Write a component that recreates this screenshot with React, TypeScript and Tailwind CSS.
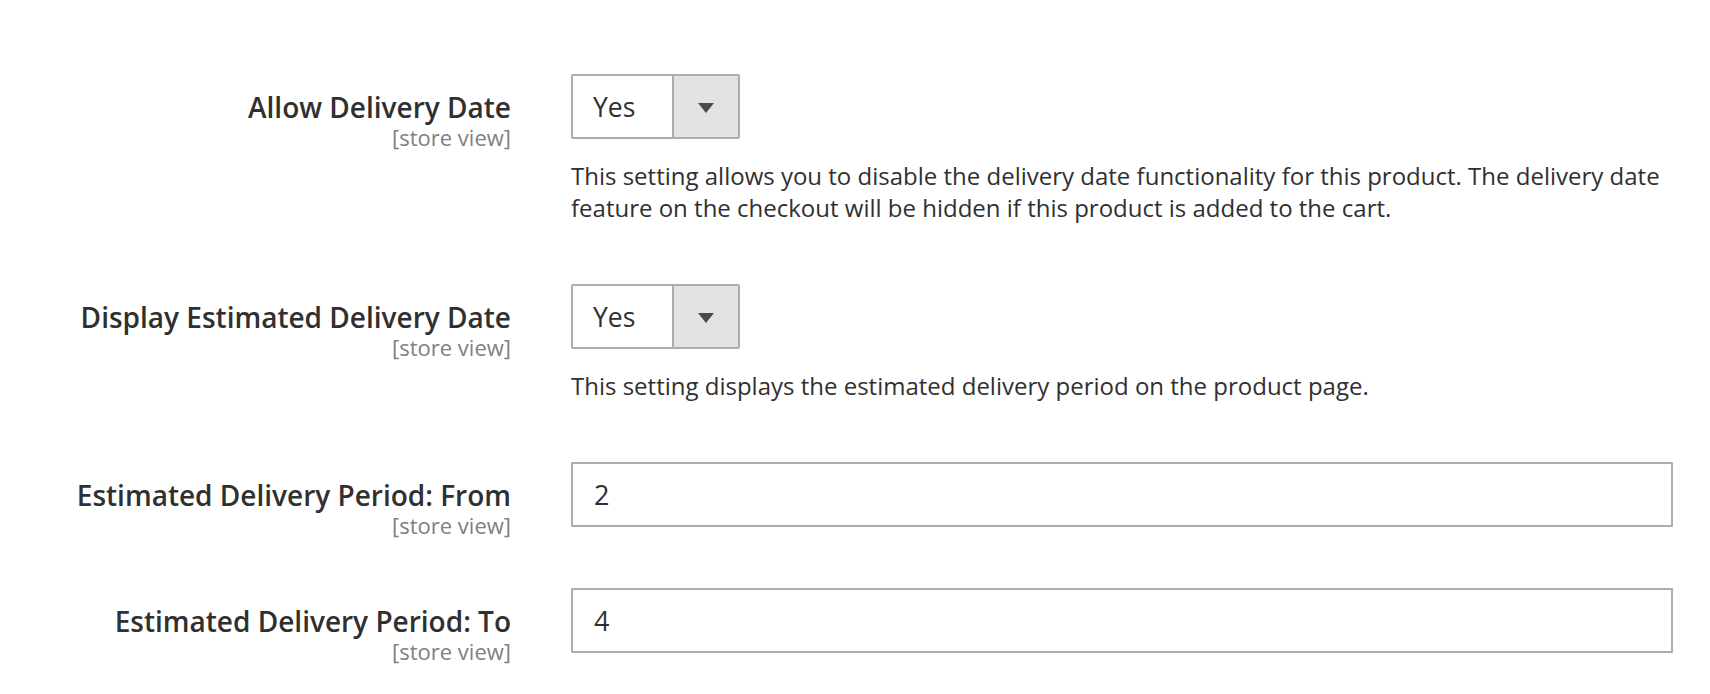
import React from "react";

function Label({ text }: { text: string }) {
  return (
    <div className="w-[511px] shrink-0 h-[65px] pt-[17px] text-right">
      <div className="text-[28px] leading-[33px] font-semibold text-[#303030] whitespace-nowrap">{text}</div>
      <div className="text-[22px] leading-[26px] text-[#808080]">[store view]</div>
    </div>
  );
}

function Select({ value }: { value: string }) {
  return (
    <div className="flex w-[169px] h-[65px] border-2 border-[#adadad] rounded-[2px] bg-white">
      <div className="flex-1 flex items-center pl-[20px] pt-[3px] text-[26.5px] text-[#303030]">{value}</div>
      <div className="w-[66px] flex items-center justify-center bg-[#e3e3e3] border-l-2 border-[#adadad] pt-[3px]">
        <div className="w-0 h-0 border-l-[8px] border-r-[8px] border-t-[10px] border-l-transparent border-r-transparent border-t-[#514943]" />
      </div>
    </div>
  );
}

function Input({ value }: { value: string }) {
  return (
    <div className="w-[1102px] h-[65px] border-2 border-[#adadad] rounded-[1px] bg-white flex items-center pl-[21px] pt-[2px] text-[27px] text-[#303030]">
      {value}
    </div>
  );
}

export default function App() {
  return (
    <div className="w-[1710px] h-[694px] bg-white pt-[74px] font-['Open_Sans',sans-serif] overflow-hidden">
      <div className="flex">
        <Label text="Allow Delivery Date" />
        <div className="ml-[60px] w-[1102px]">
          <Select value="Yes" />
          <p className="mt-[21px] text-[24px] leading-[32px] text-[#303030]">
            This setting allows you to disable the delivery date functionality for this product. The delivery date feature on the checkout will be hidden if this product is added to the cart.
          </p>
        </div>
      </div>
      <div className="flex mt-[60px]">
        <Label text="Display Estimated Delivery Date" />
        <div className="ml-[60px] w-[1102px]">
          <Select value="Yes" />
          <p className="mt-[21px] text-[24px] leading-[32px] text-[#303030]">
            This setting displays the estimated delivery period on the product page.
          </p>
        </div>
      </div>
      <div className="flex mt-[60px]">
        <Label text="Estimated Delivery Period: From" />
        <div className="ml-[60px]">
          <Input value="2" />
        </div>
      </div>
      <div className="flex mt-[61px]">
        <Label text="Estimated Delivery Period: To" />
        <div className="ml-[60px]">
          <Input value="4" />
        </div>
      </div>
    </div>
  );
}
